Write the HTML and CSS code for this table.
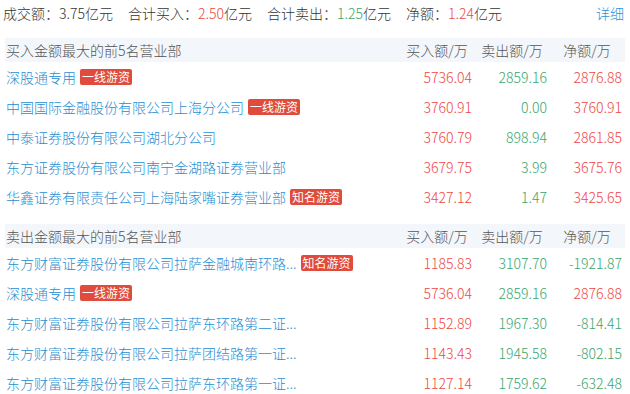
FILE: index.html
```html
<!DOCTYPE html>
<html lang="zh">
<head>
<meta charset="utf-8">
<link rel="stylesheet" href="styles.css">
</head>
<body>
<div class="panel">
  <div class="summary">
    <span class="item">成交额：<span class="num">3.75</span>亿元</span>
    <span class="item">合计买入：<span class="num up">2.50</span>亿元</span>
    <span class="item">合计卖出：<span class="num down">1.25</span>亿元</span>
    <span class="item">净额：<span class="num up">1.24</span>亿元</span>
    <a class="detail">详细</a>
  </div>

  <div class="section">
    <div class="row head">
      <div class="name">买入金额最大的前5名营业部</div>
      <div class="col">买入额/万</div>
      <div class="col">卖出额/万</div>
      <div class="col">净额/万</div>
    </div>
    <div class="row">
      <div class="name"><span class="org">深股通专用</span><span class="tag">一线游资</span></div>
      <div class="val up">5736.04</div><div class="val down">2859.16</div><div class="val up">2876.88</div>
    </div>
    <div class="row">
      <div class="name"><span class="org">中国国际金融股份有限公司上海分公司</span><span class="tag">一线游资</span></div>
      <div class="val up">3760.91</div><div class="val down">0.00</div><div class="val up">3760.91</div>
    </div>
    <div class="row">
      <div class="name"><span class="org">中泰证券股份有限公司湖北分公司</span></div>
      <div class="val up">3760.79</div><div class="val down">898.94</div><div class="val up">2861.85</div>
    </div>
    <div class="row">
      <div class="name"><span class="org">东方证券股份有限公司南宁金湖路证券营业部</span></div>
      <div class="val up">3679.75</div><div class="val down">3.99</div><div class="val up">3675.76</div>
    </div>
    <div class="row">
      <div class="name"><span class="org">华鑫证券有限责任公司上海陆家嘴证券营业部</span><span class="tag">知名游资</span></div>
      <div class="val up">3427.12</div><div class="val down">1.47</div><div class="val up">3425.65</div>
    </div>
  </div>

  <div class="section">
    <div class="row head">
      <div class="name">卖出金额最大的前5名营业部</div>
      <div class="col">买入额/万</div>
      <div class="col">卖出额/万</div>
      <div class="col">净额/万</div>
    </div>
    <div class="row">
      <div class="name"><span class="org">东方财富证券股份有限公司拉萨金融城南环路...</span><span class="tag">知名游资</span></div>
      <div class="val up">1185.83</div><div class="val down">3107.70</div><div class="val down">-1921.87</div>
    </div>
    <div class="row">
      <div class="name"><span class="org">深股通专用</span><span class="tag">一线游资</span></div>
      <div class="val up">5736.04</div><div class="val down">2859.16</div><div class="val up">2876.88</div>
    </div>
    <div class="row">
      <div class="name"><span class="org">东方财富证券股份有限公司拉萨东环路第二证...</span></div>
      <div class="val up">1152.89</div><div class="val down">1967.30</div><div class="val down">-814.41</div>
    </div>
    <div class="row">
      <div class="name"><span class="org">东方财富证券股份有限公司拉萨团结路第一证...</span></div>
      <div class="val up">1143.43</div><div class="val down">1945.58</div><div class="val down">-802.15</div>
    </div>
    <div class="row">
      <div class="name"><span class="org">东方财富证券股份有限公司拉萨东环路第一证...</span></div>
      <div class="val up">1127.14</div><div class="val down">1759.62</div><div class="val down">-632.48</div>
    </div>
  </div>
</div>
</body>
</html>
```

FILE: styles.css
```css
html, body {
  margin: 0;
  padding: 0;
  background: #ffffff;
}

body {
  font-family: "Noto Sans CJK SC", "Noto Sans", sans-serif;
  font-size: 14px;
  font-weight: 300;
  color: #333333;
}

.panel {
  width: 630px;
}

.summary {
  display: flex;
  align-items: center;
  gap: 15px;
  height: 26px;
  line-height: 26px;
  padding: 0 6px 0 3px;
  margin-bottom: 12px;
  color: #333333;
}

.summary .detail {
  margin-left: auto;
  color: #2a95d8;
  cursor: pointer;
}

.up { color: #ee4747; }
.down { color: #3aa66e; }

.section {
  margin: 0 5px 12px 5px;
}

.row {
  display: grid;
  grid-template-columns: 1fr 75px 75px 75px;
  align-items: center;
  height: 30px;
  padding: 0 3px 0 1px;
}

.row.head {
  height: 24px;
  background: #f3f6fa;
  color: #555555;
}

.row.head .col {
  text-align: center;
  padding-left: 5px;
}

.name {
  display: flex;
  align-items: center;
  white-space: nowrap;
  overflow: hidden;
}

.org {
  color: #1f8ed3;
}

.tag {
  display: inline-block;
  margin-left: 4px;
  padding: 0 2px;
  height: 16px;
  line-height: 16px;
  font-size: 12px;
  font-weight: 400;
  color: #ffffff;
  background: #e04b3b;
  border-radius: 2px;
}

.val {
  text-align: right;
}
```
